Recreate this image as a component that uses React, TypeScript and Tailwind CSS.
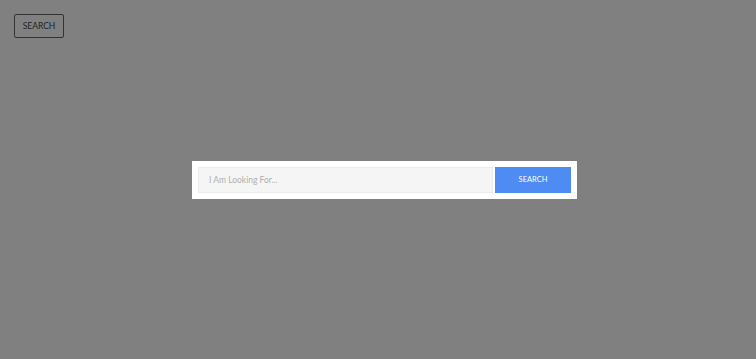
export default function App() {
  return (
    <div className="relative w-full h-[359px] bg-[#808080] font-['Liberation_Sans',Arial,sans-serif]">
      {/* top toggle */}
      <div className="p-[14px]">
        <button className="block w-[50px] h-[24px] border border-[#333] rounded-[2px] text-[8.5px] text-[#222] leading-none font-['Lato',sans-serif]">
          SEARCH
        </button>
      </div>

      {/* search bar */}
      <div className="flex justify-center pl-[13px] pt-[109px]">
        <form className="flex w-[385px] h-[38px] bg-white p-[6px] gap-[2px]">
          <input
            type="text"
            placeholder="I Am Looking For..."
            className="flex-1 h-[26px] bg-[#f5f5f5] border border-[#ececec] pl-[10px] text-[8.5px] font-['Lato',sans-serif] text-[#555] placeholder:text-[#b0b0b0] outline-none"
          />
          <button
            type="button"
            className="w-[76px] h-[26px] bg-[#4e8bf3] text-white text-[7.5px] leading-none font-['Lato',sans-serif]"
          >
            SEARCH
          </button>
        </form>
      </div>
    </div>
  );
}
